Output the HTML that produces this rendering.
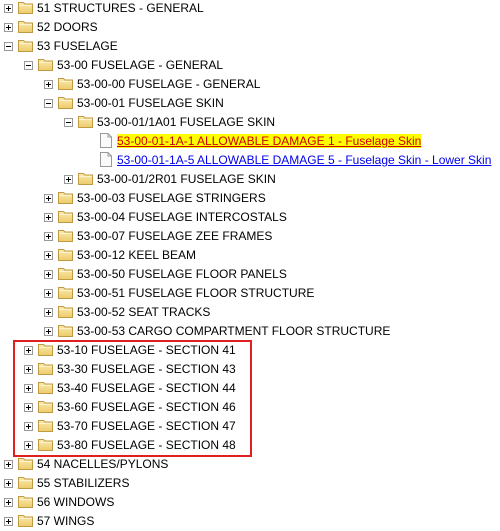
<!DOCTYPE html><html><head><style>
body{margin:0;width:500px;height:530px;background:#fff;font-family:"Liberation Sans",Arial,sans-serif;font-size:12px;color:#000;position:relative;overflow:hidden}
.r{position:absolute;height:19px;line-height:19px;white-space:nowrap}
.b{position:absolute;top:5px;width:7px;height:7px;border:1px solid #999;background:#fff}
.b:before{content:"";position:absolute;left:1px;top:3px;width:5px;height:1px;background:#000}
.p:after{content:"";position:absolute;left:3px;top:1px;width:1px;height:5px;background:#000}
.f{position:absolute;top:2px;width:16px;height:14px}
.d{position:absolute;top:1px;width:12px;height:15px}
.t{position:absolute;top:0}
a{color:#0000ee;text-decoration:underline}
.hl{background:#ffff00;color:#cc0000}
.red{position:absolute;left:13px;top:340px;width:235px;height:113px;border:2px solid #e02020}
</style></head><body>
<svg width="0" height="0" style="position:absolute"><defs>
<linearGradient id="g" x1="0" y1="0" x2="0" y2="1"><stop offset="0" stop-color="#fbeab0"/><stop offset="1" stop-color="#eccb6a"/></linearGradient>
<g id="fo"><path d="M0.5 3 L0.5 1.5 L5.5 1.5 L7 3 L14.5 3 L14.5 12.5 L0.5 12.5 Z" fill="url(#g)" stroke="#c09a40"/><path d="M1 4.5 L14 4.5" stroke="#fdf3cf"/></g>
<g id="dc"><path d="M0.5 0.5 L8 0.5 L11.5 4 L11.5 14.5 L0.5 14.5 Z" fill="#fafafa" stroke="#9a9a9a"/><path d="M8 0.5 L8 4 L11.5 4" fill="none" stroke="#9a9a9a"/></g>
</defs></svg>
<div id="tree"></div>
<div class="red"></div>
<script>
var rows=[
[0,'p','51 STRUCTURES - GENERAL'],[0,'p','52 DOORS'],[0,'m','53 FUSELAGE'],
[1,'m','53-00 FUSELAGE - GENERAL'],[2,'p','53-00-00 FUSELAGE - GENERAL'],[2,'m','53-00-01 FUSELAGE SKIN'],
[3,'m','53-00-01/1A01 FUSELAGE SKIN'],[4,'d','53-00-01-1A-1 ALLOWABLE DAMAGE 1 - Fuselage Skin',1],
[4,'d','53-00-01-1A-5 ALLOWABLE DAMAGE 5 - Fuselage Skin - Lower Skin',0],
[3,'p','53-00-01/2R01 FUSELAGE SKIN'],[2,'p','53-00-03 FUSELAGE STRINGERS'],[2,'p','53-00-04 FUSELAGE INTERCOSTALS'],
[2,'p','53-00-07 FUSELAGE ZEE FRAMES'],[2,'p','53-00-12 KEEL BEAM'],[2,'p','53-00-50 FUSELAGE FLOOR PANELS'],
[2,'p','53-00-51 FUSELAGE FLOOR STRUCTURE'],[2,'p','53-00-52 SEAT TRACKS'],[2,'p','53-00-53 CARGO COMPARTMENT FLOOR STRUCTURE'],
[1,'p','53-10 FUSELAGE - SECTION 41'],[1,'p','53-30 FUSELAGE - SECTION 43'],[1,'p','53-40 FUSELAGE - SECTION 44'],
[1,'p','53-60 FUSELAGE - SECTION 46'],[1,'p','53-70 FUSELAGE - SECTION 47'],[1,'p','53-80 FUSELAGE - SECTION 48'],
[0,'p','54 NACELLES/PYLONS'],[0,'p','55 STABILIZERS'],[0,'p','56 WINDOWS'],[0,'p','57 WINGS']];
var h='';
rows.forEach(function(r,i){
 var x=r[0]*20,y=-1+19*i;
 h+='<div class="r" style="top:'+y+'px;left:0">';
 if(r[1]=='d'){
  h+='<svg class="d" style="left:'+(x+20)+'px"><use href="#dc"/></svg>';
  h+='<span class="t" style="left:'+(x+37)+'px"><a'+(r[3]?' class="hl"':'')+'>'+r[2]+'</a></span>';
 }else{
  h+='<span class="b '+(r[1]=='p'?'p':'')+'" style="left:'+(x+4)+'px"></span>';
  h+='<svg class="f" style="left:'+(x+18)+'px"><use href="#fo"/></svg>';
  h+='<span class="t" style="left:'+(x+37)+'px">'+r[2]+'</span>';
 }
 h+='</div>';
});
document.getElementById('tree').innerHTML=h;
</script>
</body></html>
